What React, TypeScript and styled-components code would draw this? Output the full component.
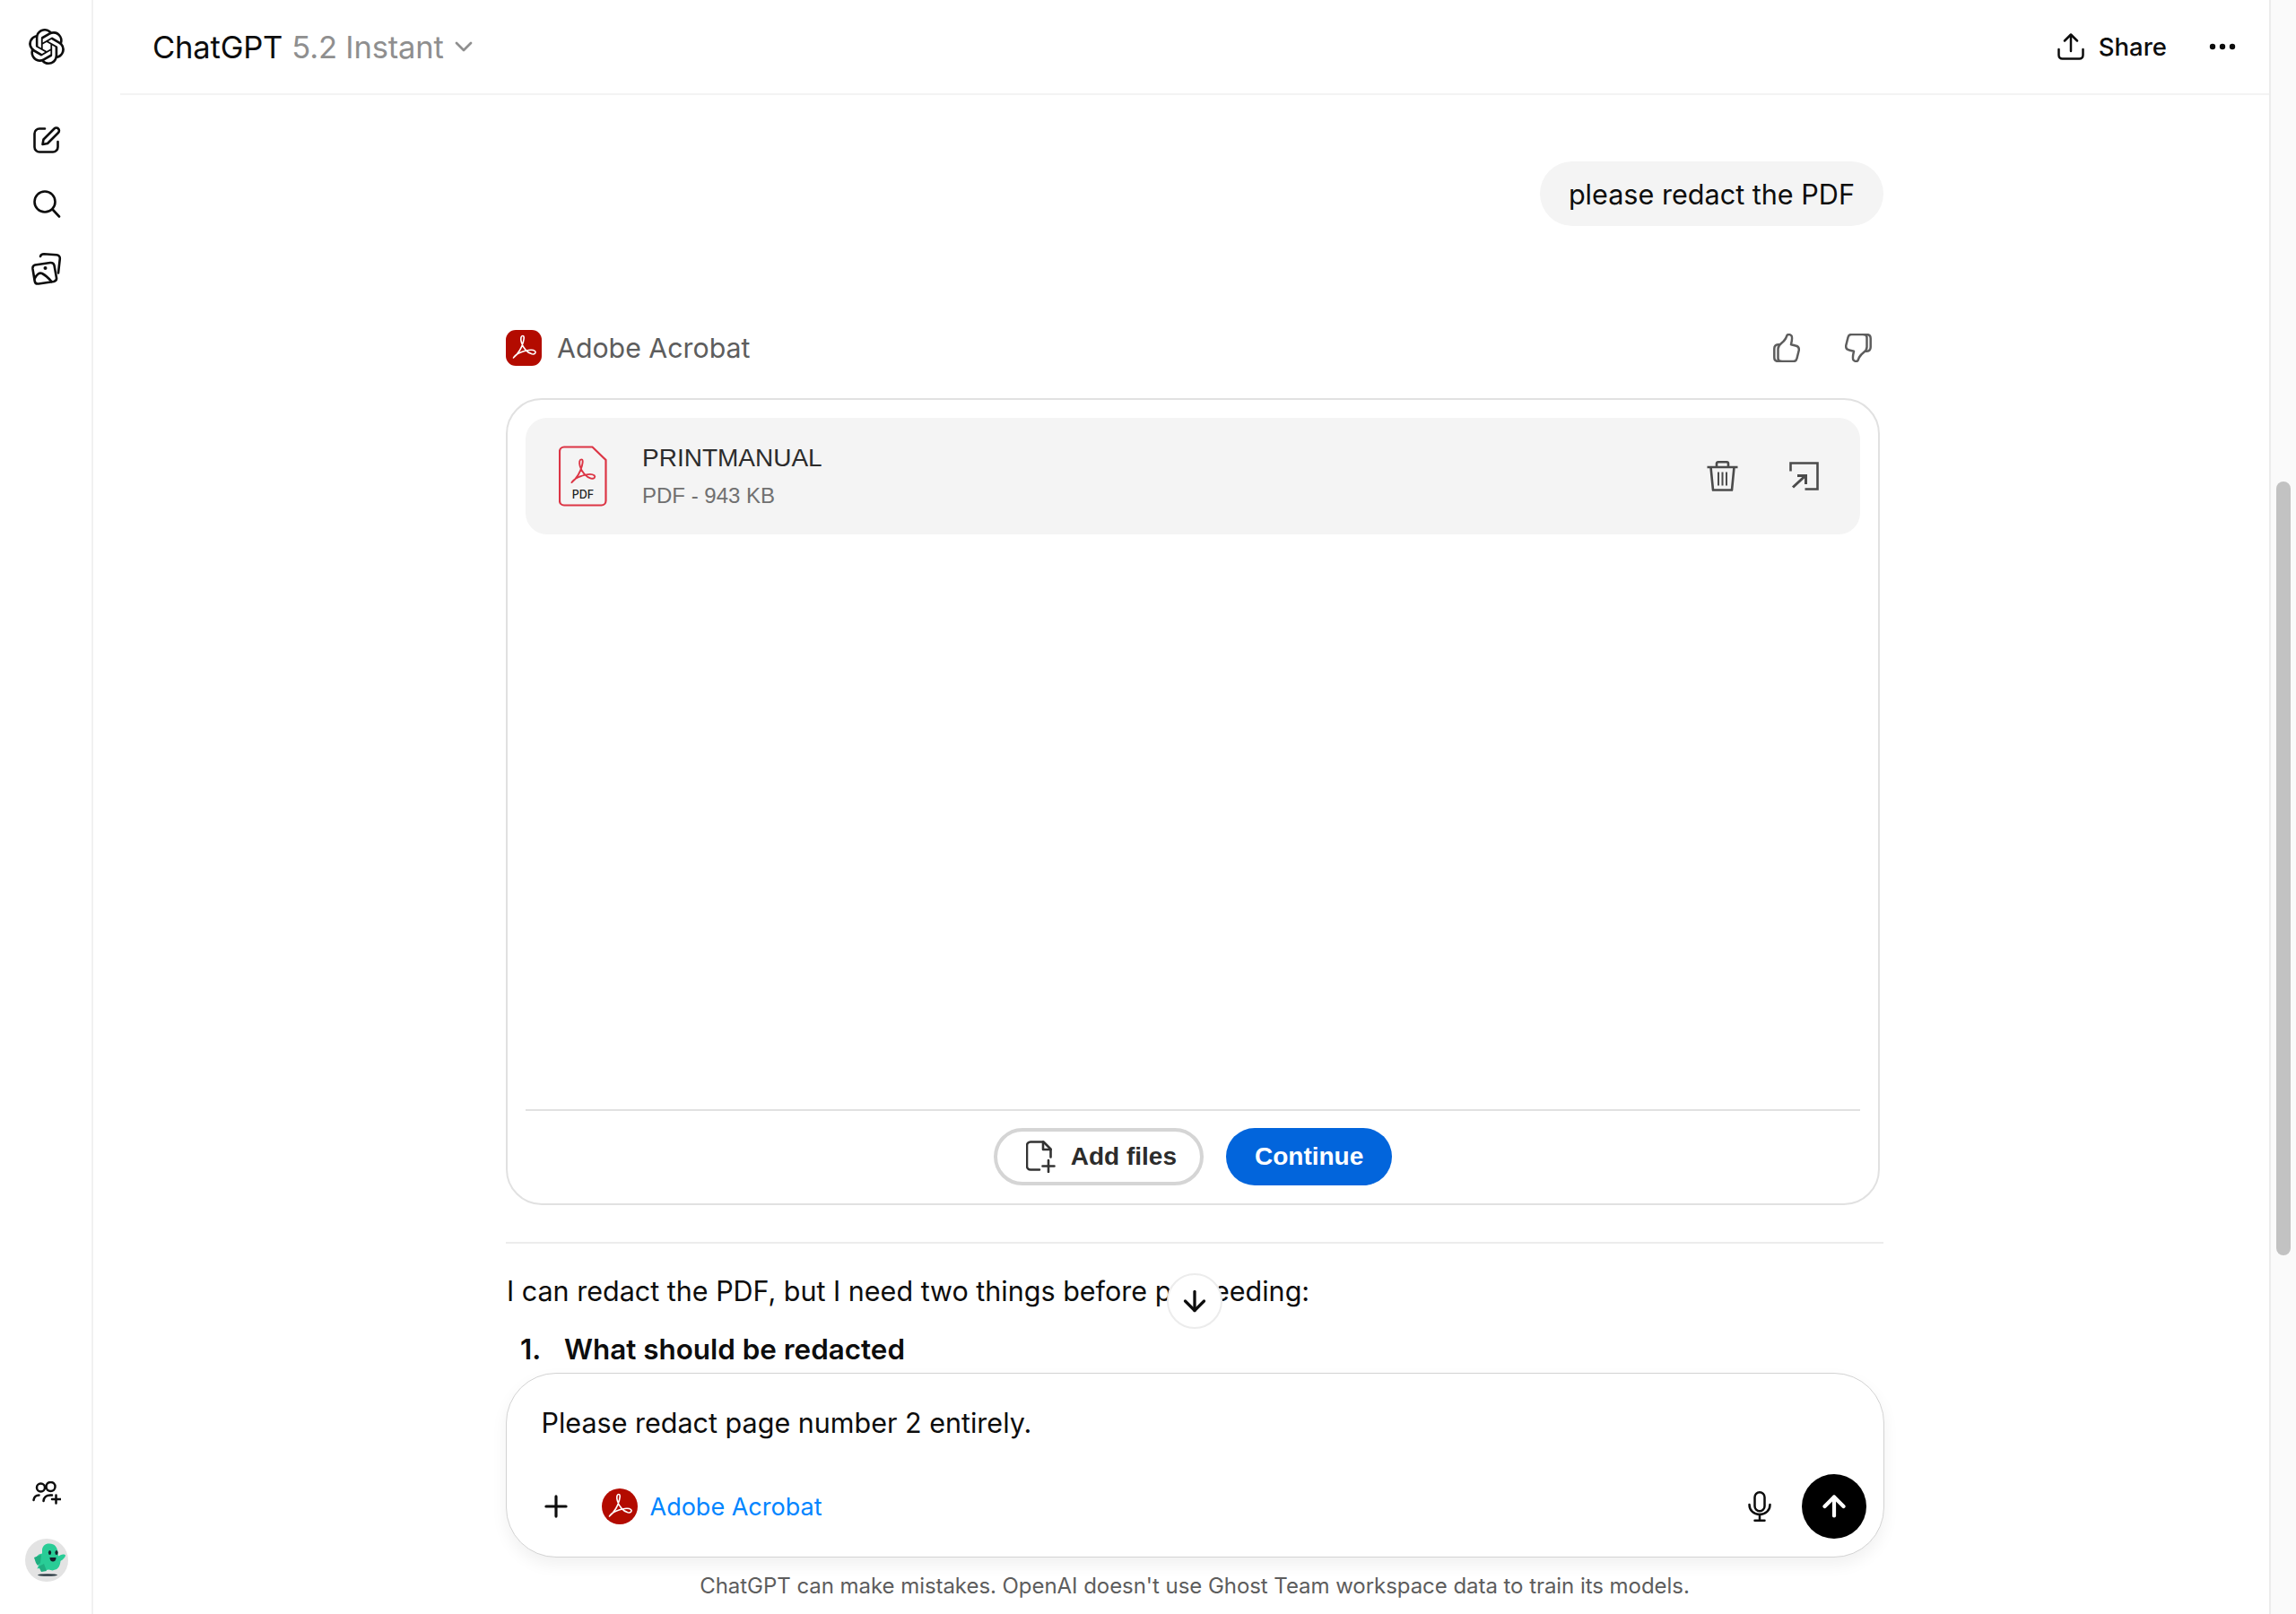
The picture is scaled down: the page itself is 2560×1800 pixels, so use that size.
import styled, { createGlobalStyle } from "styled-components";
import { SiOpenai } from "react-icons/si";
import { ArrowDown, ArrowUp, ChevronDown, Plus } from "lucide-react";

const GlobalStyle = createGlobalStyle`
  html, body { margin: 0; padding: 0; background: #fff; }
  * { box-sizing: border-box; }
  body { font-family: Inter, "Liberation Sans", sans-serif; color: #0d0d0d; }
`;

const Shell = styled.div`
  display: flex;
  width: 2560px;
  height: 1800px;
  overflow: hidden;
`;

const Sidebar = styled.nav`
  width: 104px;
  flex: none;
  display: flex;
  flex-direction: column;
  align-items: center;
  padding: 32px 0 36px 2px;
  border-right: 2px solid #f1f1f1;
  color: #0d0d0d;
`;

const SideGroup = styled.div`
  display: flex;
  flex-direction: column;
  align-items: center;
  gap: 39px;
  margin-top: 68px;
  margin-bottom: auto;
`;

const Avatar = styled.div`
  width: 48px;
  height: 48px;
  margin-top: 38px;
`;

const Main = styled.main`
  flex: 1;
  min-width: 0;
  display: flex;
  flex-direction: column;
  padding-left: 30px;
`;

const Header = styled.header`
  height: 106px;
  flex: none;
  display: flex;
  align-items: center;
  padding: 0 37px 0 36px;
  border-bottom: 2px solid #f3f3f3;
`;

const ModelName = styled.div`
  font-size: 34.6px;
  display: flex;
  align-items: center;
  letter-spacing: -0.2px;
`;

const ModelVersion = styled.span`
  color: #8f8f8f;
  margin-left: 10px;
`;

const ModelCaret = styled.span`
  display: flex;
  color: #8f8f8f;
  margin-left: 6px;
`;

const HeaderActions = styled.div`
  margin-left: auto;
  display: flex;
  align-items: center;
`;

const ShareLabel = styled.span`
  font-size: 27.5px;
  font-weight: 500;
  margin: 0 47px 0 16px;
`;

const Thread = styled.div`
  position: relative;
  flex: 1;
  min-height: 0;
  overflow: hidden;
`;

const Column = styled.div`
  width: 1536px;
  margin: 0 auto;
  display: flex;
  flex-direction: column;
`;

const Bubble = styled.div`
  align-self: flex-end;
  height: 72px;
  margin: 74px 0 0 0;
  padding: 0 32px;
  display: flex;
  align-items: center;
  border-radius: 36px;
  background: #f4f4f4;
  font-size: 30.6px;
`;

const AgentRow = styled.div`
  height: 40px;
  margin-top: 116px;
  display: flex;
  align-items: center;
  padding-right: 13px;
`;

const AgentName = styled.span`
  margin-left: 17px;
  font-size: 30.3px;
  color: #5d5d5d;
`;

const Feedback = styled.div`
  margin-left: auto;
  display: flex;
  gap: 50px;
  color: #5d5d5d;
`;

const ToolCard = styled.section`
  width: 1532px;
  height: 900px;
  margin-top: 36px;
  display: flex;
  flex-direction: column;
  padding: 20px;
  border: 2px solid #e1e1e1;
  border-radius: 40px;
  font-family: "Liberation Sans", Arial, sans-serif;
`;

const FileRow = styled.div`
  height: 130px;
  display: flex;
  align-items: center;
  padding: 0 46px 0 37px;
  background: #f4f4f4;
  border-radius: 24px;
`;

const FileMeta = styled.div`
  margin-left: 39px;
  display: flex;
  flex-direction: column;
  gap: 12px;
`;

const FileName = styled.div`
  font-size: 28px;
  color: #2c2c2c;
`;

const FileSize = styled.div`
  font-size: 24px;
  color: #707070;
`;

const FileActions = styled.div`
  margin-left: auto;
  display: flex;
  align-items: center;
  gap: 56px;
  color: #4b4b4b;
`;

const CardFooter = styled.div`
  margin-top: auto;
  border-top: 2px solid #e1e1e1;
  padding-top: 19px;
  display: flex;
  justify-content: center;
  gap: 25px;
`;

const PillButton = styled.div<{ $primary?: boolean }>`
  height: 64px;
  display: flex;
  align-items: center;
  gap: 17px;
  padding: ${(p) => (p.$primary ? "0 32px" : "0 26px 0 32px")};
  border-radius: 32px;
  font-size: 28px;
  font-weight: 700;
  border: ${(p) => (p.$primary ? "none" : "4px solid #d5d5d5")};
  background: ${(p) => (p.$primary ? "#0265dc" : "#fff")};
  color: ${(p) => (p.$primary ? "#fff" : "#2c2c2c")};
`;

const Separator = styled.hr`
  width: 100%;
  margin: 41px 0 0;
  border: none;
  border-top: 2px solid #ececec;
`;

const Paragraph = styled.p`
  margin: 33px 0 0 1px;
  font-size: 30.5px;
  line-height: 40px;
`;

const ListItem = styled.div`
  margin: 25px 0 0 16px;
  display: flex;
  font-size: 31.4px;
  font-weight: 600;
  line-height: 40px;
`;

const ListNumber = styled.span`
  width: 49px;
`;

const ScrollDown = styled.div`
  position: absolute;
  left: 1167px;
  top: 1314px;
  width: 62px;
  height: 62px;
  border-radius: 50%;
  background: #fff;
  border: 2px solid #ececec;
  display: flex;
  align-items: center;
  justify-content: center;
`;

const Composer = styled.div`
  position: relative;
  width: 1537px;
  height: 206px;
  flex: none;
  margin: 0 auto;
  display: flex;
  flex-direction: column;
  background: #fff;
  border: 1.5px solid #d3d3d3;
  border-radius: 56px;
  box-shadow: 0 8px 18px rgba(0, 0, 0, 0.06);
  padding: 0 19px 0 39px;
`;

const ComposerText = styled.div`
  margin-top: 35px;
  font-size: 30.5px;
  line-height: 40px;
`;

const ComposerTools = styled.div`
  margin-top: auto;
  margin-bottom: 20px;
  height: 72px;
  display: flex;
  align-items: center;
`;

const PlusSlot = styled.span`
  display: flex;
  margin: 0 32px 0 -3px;
`;

const ToolLink = styled.span`
  margin-left: 14px;
  font-size: 27px;
  color: #0285ff;
`;

const MicSlot = styled.span`
  display: flex;
  margin: 0 34px 0 auto;
`;

const SendButton = styled.div`
  width: 72px;
  height: 72px;
  border-radius: 50%;
  background: #000;
  color: #fff;
  display: flex;
  align-items: center;
  justify-content: center;
`;

const Disclaimer = styled.div`
  height: 63px;
  flex: none;
  display: flex;
  align-items: center;
  justify-content: center;
  font-size: 24px;
  color: #5d5d5d;
  letter-spacing: -0.05px;
`;

const ScrollTrack = styled.div`
  width: 30px;
  flex: none;
  background: #fafafa;
  border-left: 2px solid #ececec;
  padding: 537px 0 0 6px;
`;

const ScrollThumb = styled.div`
  width: 16px;
  height: 863px;
  border-radius: 8px;
  background: #c2c2c2;
`;

const AcrobatBadge = styled.div<{ $round?: boolean }>`
  width: 40px;
  height: 40px;
  flex: none;
  display: flex;
  background: #b30b00;
  border-radius: ${(p) => (p.$round ? "50%" : "11px")};
`;

const RIBBON =
  "M8.500 31C12 28 17.500 21 19.500 13C20.600 8.500 20.500 6.500 18.800 6.500C16.800 6.500 16.300 9.500 17.300 13.500C19 20 24 25.500 29 26.800C32.500 27.500 34 25 32.500 23.500C30 21.500 23 22.500 16.500 25C12.500 26.700 9.500 29 8.500 31Z";

function AcrobatMark() {
  return (
    <svg width="40" height="40" viewBox="0 0 40 40" fill="none" stroke="#fff" strokeWidth="1.6" strokeLinejoin="round">
      <path d={RIBBON} />
    </svg>
  );
}

function EditIcon() {
  return (
    <svg width="32" height="32" viewBox="0 0 32 32" fill="none" stroke="currentColor" strokeWidth="2.6" strokeLinecap="round" strokeLinejoin="round">
      <path d="M14 3.500H8a5.500 5.500 0 0 0-5.500 5.500v15A5.500 5.500 0 0 0 8 29.500h15a5.500 5.500 0 0 0 5.500-5.500v-6" />
      <path d="M11.500 21l1-5.500L24.500 3.500a3 3 0 0 1 4.500 4.500L17 20z" />
    </svg>
  );
}

function SearchIcon() {
  return (
    <svg width="32" height="32" viewBox="0 0 32 32" fill="none" stroke="currentColor" strokeWidth="2.6" strokeLinecap="round">
      <circle cx="14" cy="14" r="11.500" />
      <path d="M23 23l7 7.500" />
    </svg>
  );
}

function ImagesIcon() {
  return (
    <svg width="36" height="36" viewBox="0 0 36 36" fill="none" stroke="currentColor" strokeWidth="2.6" strokeLinecap="round" strokeLinejoin="round">
      <path d="M11 4C11.500 2 13 1.300 15 1.300L29 2.300C31.500 2.500 33 4 32.800 6.500L31 22.500" />
      <path d="M5 13.500L22 11C24.500 10.700 26 12 26.500 14L29 28C29.300 30 28 31.500 26 32L9 34.500C6.500 34.800 5 33.500 4.700 31.500L2.500 18C2.200 15.500 3 14 5 13.500Z" />
      <path d="M4.500 29C7 24 10 21.500 13 23C16 24.500 20 28 23.500 32" />
      <circle cx="16.500" cy="17" r="2" fill="currentColor" stroke="none" />
    </svg>
  );
}

function PeopleIcon() {
  return (
    <svg width="32" height="26" viewBox="0 0 32 26" fill="none" stroke="currentColor" strokeWidth="2.5" strokeLinecap="round">
      <circle cx="9.500" cy="7" r="4.500" />
      <circle cx="20.500" cy="6" r="5" />
      <path d="M1.500 21c.5-3.500 2.500-5.500 6-5.500" />
      <path d="M12.500 22c.5-4 3-6.500 7.500-6.500h2" />
      <path d="M26.500 15.500v9M22 20h9.500" />
    </svg>
  );
}

function GhostAvatar() {
  return (
    <svg width="48" height="48" viewBox="0 0 48 48">
      <circle cx="24" cy="24" r="24" fill="#e3e3e3" />
      <ellipse cx="25" cy="40.500" rx="11" ry="1.300" fill="#2b3a42" />
      <path d="M19 12c1-5 4-6.500 8-6.500 6 0 9 4 9.500 10l.5 4 3-1.500c2-1 4.500-.5 5 .5 0 2-3 5-5.500 6.500-.5 5-2.500 9-6 9.500l-3 1-4-1-6 1-2-3-5 1 2-5-3-2 2-3-4-1.500 5-4.500 3.500-1z" fill="#29cc96" />
      <path d="M10 21l8-3-1 9-3 3-2-3zm5 10l6-3 3 8-6 1z" fill="#1fae80" />
      <ellipse cx="27.500" cy="15.500" rx="1.600" ry="2.500" fill="#14202a" />
      <ellipse cx="35" cy="15.500" rx="1.600" ry="2.500" fill="#14202a" />
      <path d="M27.500 21h7c0 3-1.500 4.500-3.500 4.500s-3.500-1.500-3.500-4.500z" fill="#14202a" />
    </svg>
  );
}

function ShareIcon() {
  return (
    <svg width="30" height="30" viewBox="0 0 30 30" fill="none" stroke="currentColor" strokeWidth="2.5" strokeLinecap="round" strokeLinejoin="round">
      <path d="M15 20V2M8 8.500L15 1.500l7 7" />
      <path d="M1.500 18v6.500c0 2.200 1.500 4 4 4h19c2.500 0 4-1.800 4-4V18" />
    </svg>
  );
}

function MoreIcon() {
  return (
    <svg width="30" height="8" viewBox="0 0 30 8" fill="currentColor">
      <circle cx="4" cy="4" r="3.200" />
      <circle cx="15" cy="4" r="3.200" />
      <circle cx="26" cy="4" r="3.200" />
    </svg>
  );
}

function ThumbIcon({ down }: { down?: boolean }) {
  return (
    <svg width="30" height="32" viewBox="0 0 30 32" fill="none" stroke="currentColor" strokeWidth="2.500" strokeLinejoin="round" strokeLinecap="round" transform={down ? "rotate(180)" : undefined}>
      <path d="M14 5.500L15.500 2C16.500 .5 19 .8 20.500 2.500C21.500 4 21 8 20 12.200L25 13.500C27.500 14 29 16 28.800 18.500L26.500 27.800C26 30 24.500 31 22.500 31H9C6.500 31 5.500 29.500 5.500 27.500V17C5.500 14 7 12.500 9 11C11 9.500 12.500 8 14 5.500Z" />
      <path d="M6.500 12.300H5.500C3 12.500 1.300 14.500 1.300 17V26.500C1.300 29.500 3 31 6 31H9" />
    </svg>
  );
}

function PdfFileIcon() {
  return (
    <svg width="54" height="68" viewBox="0 0 54 68" fill="none">
      <path d="M6 1.500h31.500L52.500 16v45.500a5 5 0 0 1-5 5H6a5 5 0 0 1-5-5v-55a5 5 0 0 1 5-5z" stroke="#dc3545" strokeWidth="2.200" />
      <g transform="translate(5.500 8.500) scale(1.050)">
        <path d={RIBBON} stroke="#dc3545" strokeWidth="1.8" strokeLinejoin="round" />
      </g>
      <text x="27" y="59" textAnchor="middle" fontFamily="Inter, sans-serif" fontSize="12.500" fontWeight="500" fill="#222">PDF</text>
    </svg>
  );
}

function TrashIcon() {
  return (
    <svg width="37" height="34" viewBox="0 0 37 34" fill="none" stroke="currentColor" strokeWidth="2.600" strokeLinejoin="round">
      <path d="M1.500 7h34M12 7V3c0-1 .8-1.700 1.700-1.700h9.600c.9 0 1.700.7 1.700 1.700v4" />
      <path d="M5.500 7l2.500 25.500h21L31.500 7" />
      <path d="M14 12.500v15M18.500 12.500v15M23 12.500v15" strokeWidth="2" />
    </svg>
  );
}

function ExpandIcon() {
  return (
    <svg width="33" height="32" viewBox="0 0 33 32" fill="none" stroke="currentColor" strokeWidth="2.600">
      <path d="M1.500 10.500V1.500h30v29h-14" />
      <path d="M4 28.500l14-13M9 15.500H18.500V25" strokeWidth="3" />
    </svg>
  );
}

function FilePlusIcon() {
  return (
    <svg width="33" height="36" viewBox="0 0 33 36" fill="none" stroke="#333" strokeWidth="2.600" strokeLinejoin="round" strokeLinecap="round">
      <path d="M15 32.500H5a4 4 0 0 1-4-4V5.500a4 4 0 0 1 4-4h14.500l8 8v9" />
      <path d="M19 1.500v8.500h8.500" />
      <path d="M25 22v13M18.500 28.500h13" />
    </svg>
  );
}

function MicIcon() {
  return (
    <svg width="26" height="34" viewBox="0 0 26 34" fill="none" stroke="currentColor" strokeWidth="2.500" strokeLinecap="round">
      <rect x="7.500" y="1.300" width="11" height="21" rx="5.500" />
      <path d="M1.500 15c0 6.500 5 11 11.500 11s11.500-4.500 11.500-11" />
      <path d="M13 26v6.500M7.500 32.700h11" />
    </svg>
  );
}

export default function App() {
  return (
    <>
      <GlobalStyle />
      <Shell>
        <Sidebar>
          <SiOpenai size={40} />
          <SideGroup>
            <EditIcon />
            <SearchIcon />
            <ImagesIcon />
          </SideGroup>
          <PeopleIcon />
          <Avatar>
            <GhostAvatar />
          </Avatar>
        </Sidebar>

        <Main>
          <Header>
            <ModelName>
              ChatGPT
              <ModelVersion>5.2 Instant</ModelVersion>
              <ModelCaret>
                <ChevronDown size={32} strokeWidth={2} />
              </ModelCaret>
            </ModelName>
            <HeaderActions>
              <ShareIcon />
              <ShareLabel>Share</ShareLabel>
              <MoreIcon />
            </HeaderActions>
          </Header>

          <Thread>
            <Column>
              <Bubble>please redact the PDF</Bubble>
              <AgentRow>
                <AcrobatBadge>
                  <AcrobatMark />
                </AcrobatBadge>
                <AgentName>Adobe Acrobat</AgentName>
                <Feedback>
                  <ThumbIcon />
                  <ThumbIcon down />
                </Feedback>
              </AgentRow>

              <ToolCard>
                <FileRow>
                  <PdfFileIcon />
                  <FileMeta>
                    <FileName>PRINTMANUAL</FileName>
                    <FileSize>PDF - 943 KB</FileSize>
                  </FileMeta>
                  <FileActions>
                    <TrashIcon />
                    <ExpandIcon />
                  </FileActions>
                </FileRow>
                <CardFooter>
                  <PillButton>
                    <FilePlusIcon />
                    Add files
                  </PillButton>
                  <PillButton $primary>Continue</PillButton>
                </CardFooter>
              </ToolCard>

              <Separator />
              <Paragraph>I can redact the PDF, but I need two things before proceeding:</Paragraph>
              <ListItem>
                <ListNumber>1.</ListNumber>
                What should be redacted
              </ListItem>
            </Column>
            <ScrollDown>
              <ArrowDown size={36} strokeWidth={2.2} />
            </ScrollDown>
          </Thread>

          <Composer>
            <ComposerText>Please redact page number 2 entirely.</ComposerText>
            <ComposerTools>
              <PlusSlot>
                <Plus size={38} strokeWidth={2} />
              </PlusSlot>
              <AcrobatBadge $round>
                <AcrobatMark />
              </AcrobatBadge>
              <ToolLink>Adobe Acrobat</ToolLink>
              <MicSlot>
                <MicIcon />
              </MicSlot>
              <SendButton>
                <ArrowUp size={36} strokeWidth={2.8} />
              </SendButton>
            </ComposerTools>
          </Composer>
          <Disclaimer>ChatGPT can make mistakes. OpenAI doesn't use Ghost Team workspace data to train its models.</Disclaimer>
        </Main>

        <ScrollTrack>
          <ScrollThumb />
        </ScrollTrack>
      </Shell>
    </>
  );
}
